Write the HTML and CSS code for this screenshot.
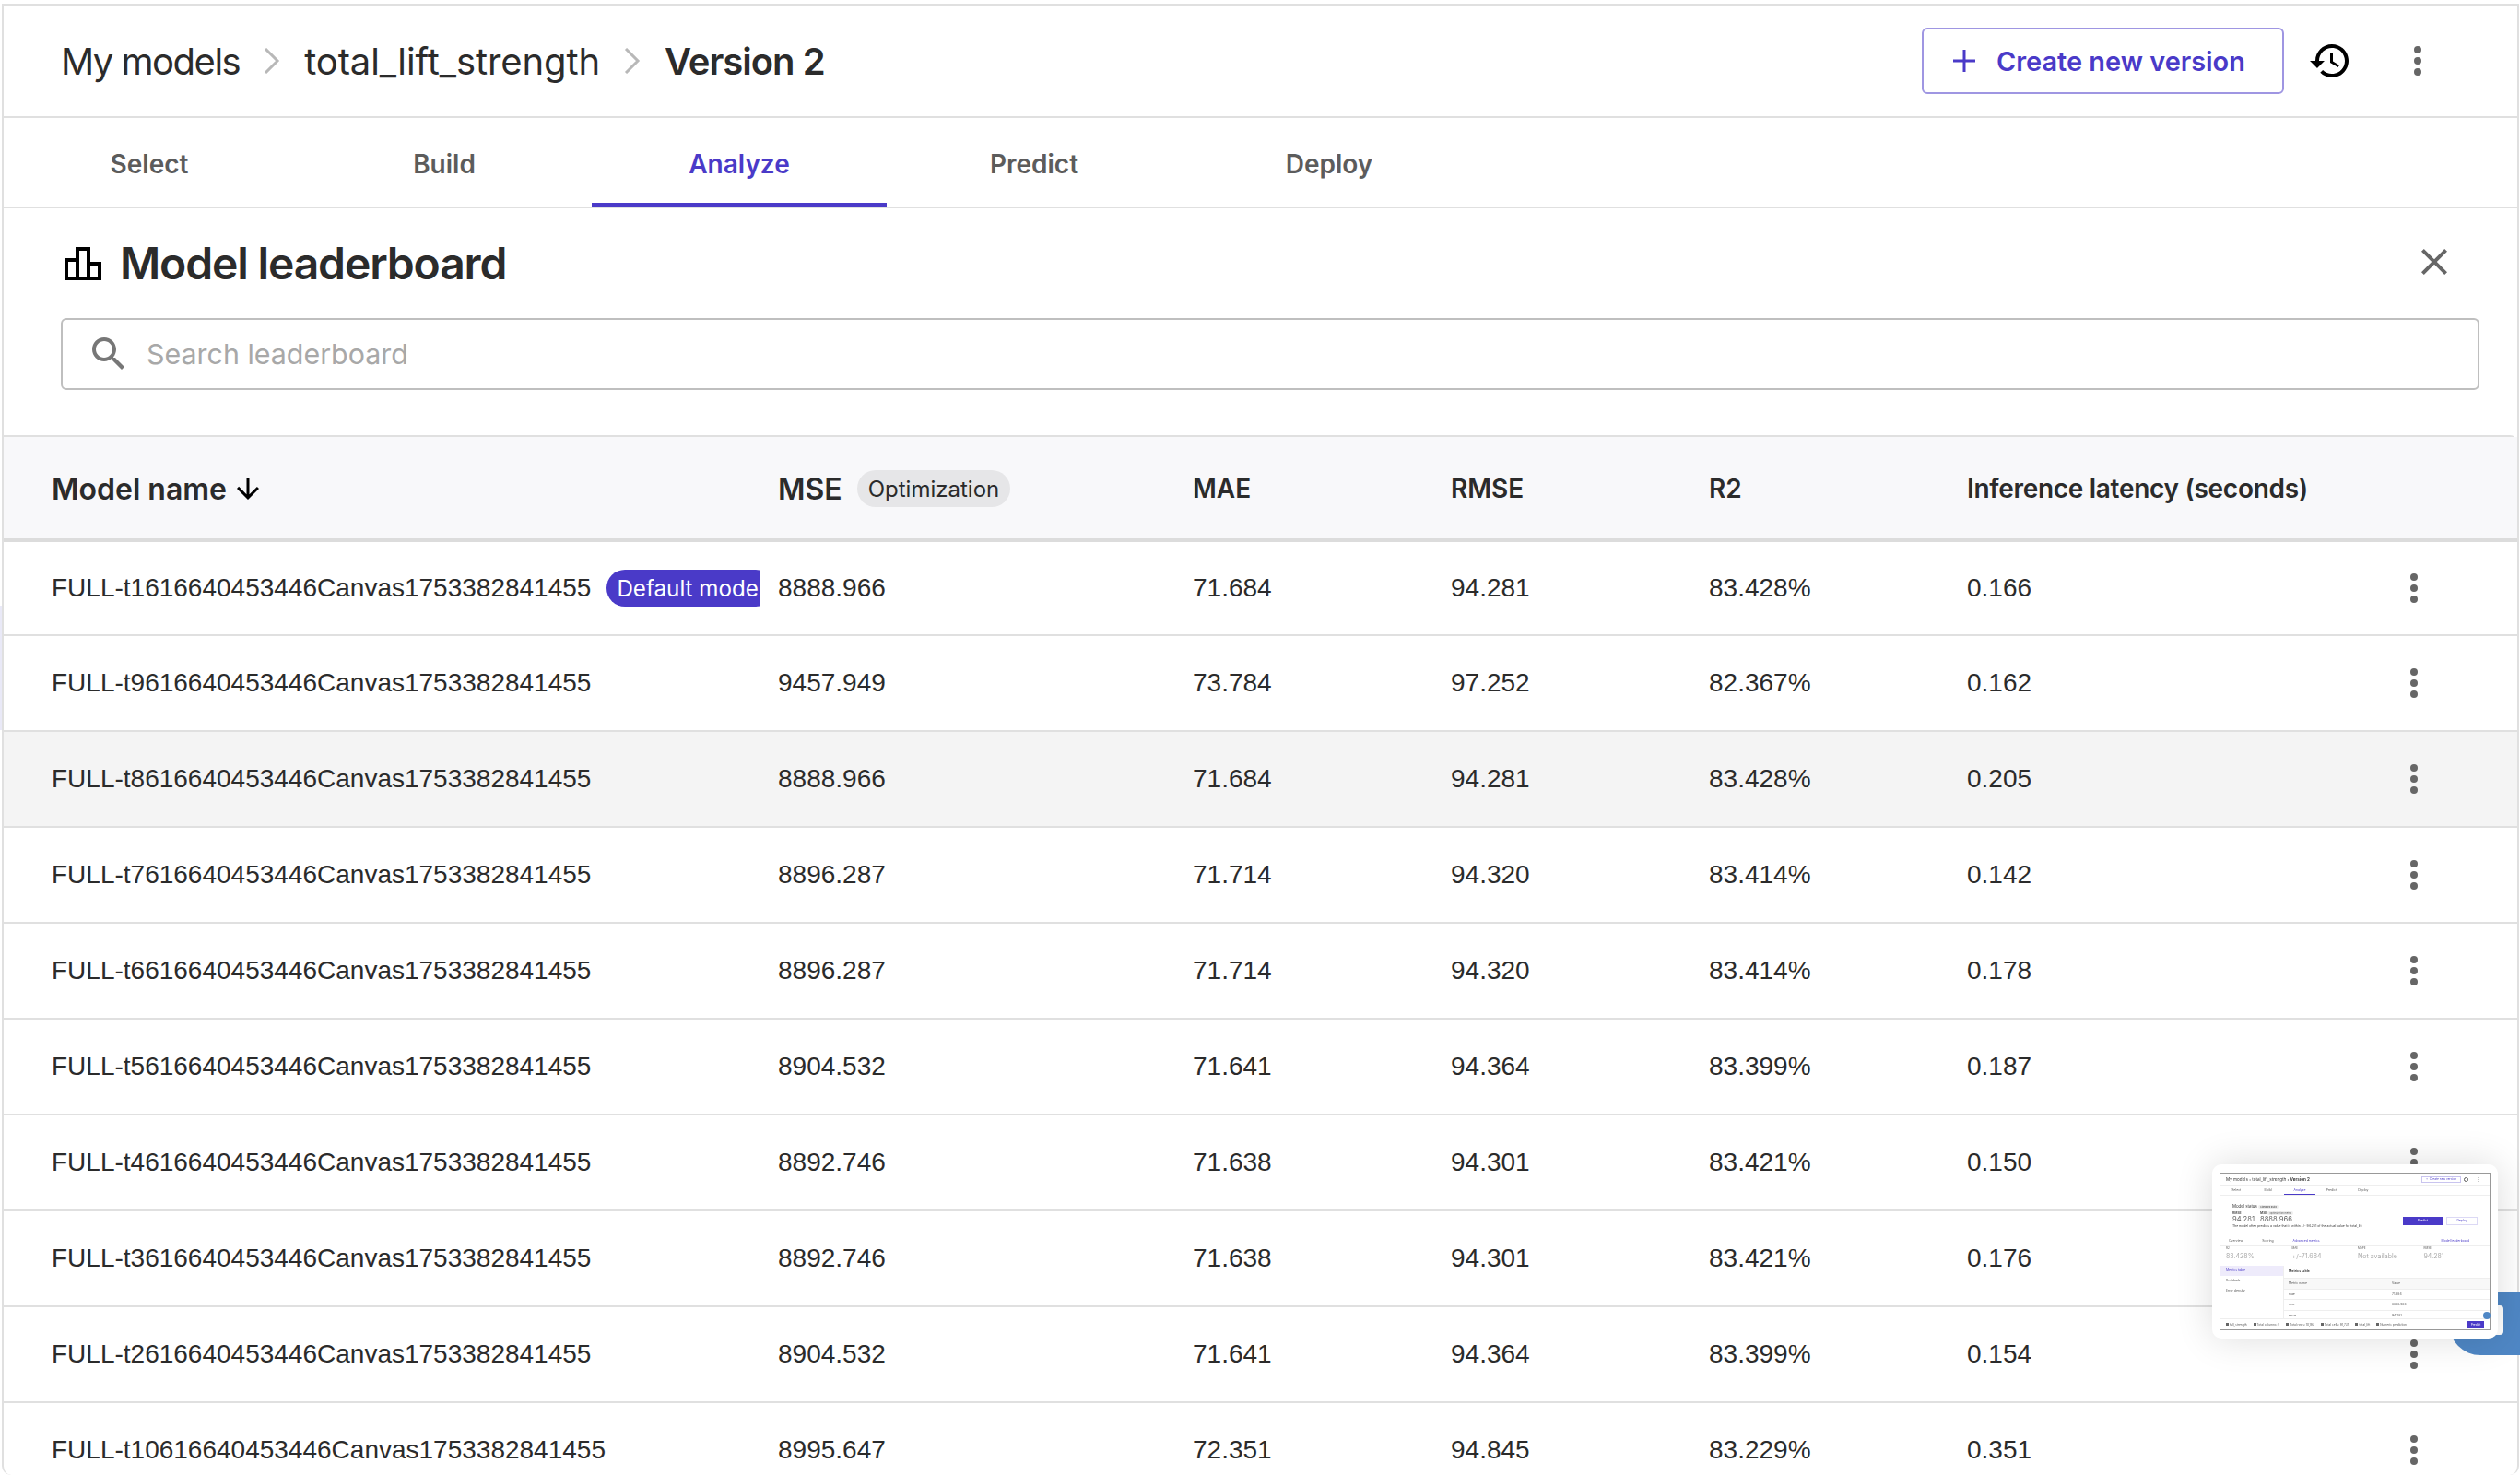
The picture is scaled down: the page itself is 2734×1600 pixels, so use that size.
FILE: index.html
```html
<!DOCTYPE html>
<html lang="en">
<head>
    <title>Model leaderboard</title>
    <link rel="stylesheet" href="styles.css">
</head>
<body>
    <div class="frame">
        <header class="topbar">
            <nav class="crumbs">
                <span>My models</span>
                <svg class="chev" viewBox="0 0 18 28"><path d="M2 1l13 13L2 27"/></svg>
                <span class="crumb-long">total_lift_strength</span>
                <svg class="chev" viewBox="0 0 18 28"><path d="M2 1l13 13L2 27"/></svg>
                <span class="crumb-current">Version 2</span>
            </nav>
            <button class="new-version">
                <svg class="plus" viewBox="0 0 24 24"><path d="M12 0v24M0 12h24"/></svg>
                Create new version
            </button>
            <svg class="history" viewBox="0 0 24 24"><path d="M13 3c-4.97 0-9 4.03-9 9H1l3.89 3.89.07.14L9 12H6c0-3.87 3.13-7 7-7s7 3.13 7 7-3.13 7-7 7c-1.93 0-3.68-.79-4.94-2.06l-1.42 1.42C8.27 19.99 10.51 21 13 21c4.97 0 9-4.03 9-9s-4.03-9-9-9zm-1 5v5l4.28 2.54.72-1.21-3.5-2.08V8H12z"/></svg>
            <div class="kebab top-kebab"><i></i><i></i><i></i></div>
        </header>

        <nav class="tabs">
            <a>Select</a>
            <a>Build</a>
            <a class="active">Analyze</a>
            <a>Predict</a>
            <a>Deploy</a>
        </nav>

        <section class="board-head">
            <svg class="board-icon" viewBox="0 0 24 24"><path d="M16 11V3H8v6H2v12h20V11h-6zm-6-6h4v14h-4V5zm-6 6h4v8H4v-8zm16 8h-4v-6h4v6z"/></svg>
            <h1>Model leaderboard</h1>
            <svg class="close" viewBox="0 0 24 24"><path d="M19 6.41 17.59 5 12 10.59 6.41 5 5 6.41 10.59 12 5 17.59 6.41 19 12 13.41 17.59 19 19 17.59 13.41 12z"/></svg>
        </section>

        <div class="search">
            <svg class="search-icon" viewBox="0 0 24 24"><path d="M15.5 14h-.79l-.28-.27C15.41 12.59 16 11.11 16 9.5 16 5.91 13.09 3 9.5 3S3 5.91 3 9.5 5.91 16 9.5 16c1.61 0 3.09-.59 4.23-1.57l.27.28v.79l5 4.99L20.49 19l-4.99-5zm-6 0C7.01 14 5 11.99 5 9.5S7.01 5 9.5 5 14 7.01 14 9.5 11.99 14 9.5 14z"/></svg>
            <span>Search leaderboard</span>
        </div>

        <section class="board">
            <div class="row head">
                <div class="cell big">Model name
                    <svg class="sort" viewBox="0 0 24 24"><path d="M20 12l-1.41-1.41L13 16.17V4h-2v12.17l-5.58-5.59L4 12l8 8 8-8z"/></svg>
                </div>
                <div class="cell big">MSE <span class="opt">Optimization</span></div>
                <div class="cell">MAE</div>
                <div class="cell">RMSE</div>
                <div class="cell">R2</div>
                <div class="cell latency">Inference latency (seconds)</div>
                <div class="cell"></div>
            </div>

            <div class="row">
                <div class="cell name">FULL-t1616640453446Canvas1753382841455 <span class="default">Default model</span></div>
                <div class="cell">8888.966</div><div class="cell">71.684</div><div class="cell">94.281</div><div class="cell">83.428%</div><div class="cell">0.166</div>
                <div class="kebab"><i></i><i></i><i></i></div>
            </div>
            <div class="row">
                <div class="cell name">FULL-t9616640453446Canvas1753382841455</div>
                <div class="cell">9457.949</div><div class="cell">73.784</div><div class="cell">97.252</div><div class="cell">82.367%</div><div class="cell">0.162</div>
                <div class="kebab"><i></i><i></i><i></i></div>
            </div>
            <div class="row hover">
                <div class="cell name">FULL-t8616640453446Canvas1753382841455</div>
                <div class="cell">8888.966</div><div class="cell">71.684</div><div class="cell">94.281</div><div class="cell">83.428%</div><div class="cell">0.205</div>
                <div class="kebab"><i></i><i></i><i></i></div>
            </div>
            <div class="row">
                <div class="cell name">FULL-t7616640453446Canvas1753382841455</div>
                <div class="cell">8896.287</div><div class="cell">71.714</div><div class="cell">94.320</div><div class="cell">83.414%</div><div class="cell">0.142</div>
                <div class="kebab"><i></i><i></i><i></i></div>
            </div>
            <div class="row">
                <div class="cell name">FULL-t6616640453446Canvas1753382841455</div>
                <div class="cell">8896.287</div><div class="cell">71.714</div><div class="cell">94.320</div><div class="cell">83.414%</div><div class="cell">0.178</div>
                <div class="kebab"><i></i><i></i><i></i></div>
            </div>
            <div class="row">
                <div class="cell name">FULL-t5616640453446Canvas1753382841455</div>
                <div class="cell">8904.532</div><div class="cell">71.641</div><div class="cell">94.364</div><div class="cell">83.399%</div><div class="cell">0.187</div>
                <div class="kebab"><i></i><i></i><i></i></div>
            </div>
            <div class="row">
                <div class="cell name">FULL-t4616640453446Canvas1753382841455</div>
                <div class="cell">8892.746</div><div class="cell">71.638</div><div class="cell">94.301</div><div class="cell">83.421%</div><div class="cell">0.150</div>
                <div class="kebab"><i></i><i></i><i></i></div>
            </div>
            <div class="row">
                <div class="cell name">FULL-t3616640453446Canvas1753382841455</div>
                <div class="cell">8892.746</div><div class="cell">71.638</div><div class="cell">94.301</div><div class="cell">83.421%</div><div class="cell">0.176</div>
                <div class="kebab"><i></i><i></i><i></i></div>
            </div>
            <div class="row">
                <div class="cell name">FULL-t2616640453446Canvas1753382841455</div>
                <div class="cell">8904.532</div><div class="cell">71.641</div><div class="cell">94.364</div><div class="cell">83.399%</div><div class="cell">0.154</div>
                <div class="kebab"><i></i><i></i><i></i></div>
            </div>
            <div class="row">
                <div class="cell name">FULL-t10616640453446Canvas1753382841455</div>
                <div class="cell">8995.647</div><div class="cell">72.351</div><div class="cell">94.845</div><div class="cell">83.229%</div><div class="cell">0.351</div>
                <div class="kebab"><i></i><i></i><i></i></div>
            </div>
        </section>
    </div>

    <div class="edge-tint"></div>

    <!-- chat widget peeking out behind the preview -->
    <div class="chat"><div class="chat-bubble"></div></div>

    <!-- floating preview of the previous page -->
    <aside class="preview">
        <div class="shot">
            <div class="s-top">
                <span>My models › total_lift_strength › <b>Version 2</b></span>
                <span class="s-new">+ &nbsp;Create new version</span>
                <span class="s-hist"></span>
                <span class="s-dots">⋮</span>
            </div>
            <div class="s-tabs">
                <span>Select</span><span>Build</span><span class="on">Analyze</span><span>Predict</span><span>Deploy</span>
            </div>
            <div class="s-status">
                <div class="s-status-text">
                    <div class="s-title">Model status <span class="s-chip">Standard build</span></div>
                    <div class="s-metrics">
                        <div><b>RMSE</b><p>94.281</p></div>
                        <div><b>MSE</b> <span class="s-chip">Optimization metric</span><p>8888.966</p></div>
                    </div>
                    <div class="s-note">The model often predicts a value that is within +/- 94.281 of the actual value for total_lift</div>
                </div>
                <span class="s-predict">Predict</span>
                <span class="s-deploy">Deploy</span>
            </div>
            <div class="s-tabs2">
                <span>Overview</span><span>Scoring</span><span class="on">Advanced metrics</span>
                <span class="s-link">Model leaderboard</span>
            </div>
            <div class="s-cards">
                <div><b>R2</b><p>83.428%</p></div>
                <div><b>MAE</b><p>+/-71.684</p></div>
                <div><b>MAPE</b><p>Not available</p></div>
                <div><b>RMSE</b><p>94.281</p></div>
            </div>
            <div class="s-body">
                <div class="s-side">
                    <span class="on">Metrics table</span><span>Residuals</span><span>Error density</span>
                </div>
                <div class="s-table">
                    <div class="s-table-title">Metrics table</div>
                    <div class="s-tr s-th"><span>Metric name</span><span>Value</span></div>
                    <div class="s-tr"><span>mae</span><span>71.684</span></div>
                    <div class="s-tr"><span>mse</span><span>8888.966</span></div>
                    <div class="s-tr"><span>rmse</span><span>94.281</span></div>
                </div>
            </div>
            <div class="s-foot">
                <span class="s-stat">full_strength</span>
                <span class="s-stat">Total columns: 9</span>
                <span class="s-stat">Total rows: 10,193</span>
                <span class="s-stat">Total cells: 91,737</span>
                <span class="s-stat">total_lift</span>
                <span class="s-stat">Numeric prediction</span>
                <span class="s-foot-btn">Predict</span>
            </div>
        </div>
        <span class="s-badge"></span>
    </aside>
</body>
</html>
```

FILE: styles.css
```css
* {
    box-sizing: border-box;
}
html,
body {
    margin: 0;
    height: 1600px;
    overflow: hidden;
    background-color: #fff;
}
body {
    padding: 4px 1px 0 2px;
    font-family: Inter, "Liberation Sans", sans-serif;
    color: #2b2b2b;
}
svg {
    flex: none;
    display: block;
}
.frame {
    height: 1596px;
    border: solid #e0e0e0;
    border-width: 2px 2px 0 2px;
    border-radius: 0 0 10px 10px;
    overflow: hidden;
}
.edge-tint {
    position: absolute;
    left: 0;
    top: 657px;
    width: 2px;
    height: 135px;
    background-color: #e9e9f7;
}

/* top bar */
.topbar {
    height: 122px;
    display: flex;
    align-items: center;
    padding-left: 62px;
    border-bottom: 2px solid #e0e0e0;
}
.crumbs {
    flex: 1;
    display: flex;
    align-items: center;
    font-size: 40px;
    letter-spacing: -1.5px;
}
.chev {
    width: 18px;
    height: 28px;
    margin: 0 26px;
    fill: none;
    stroke: #b8b8b8;
    stroke-width: 3;
}
.crumb-long {
    letter-spacing: -0.1px;
}
.crumb-current {
    font-weight: 600;
    letter-spacing: -1px;
}
.new-version {
    width: 393px;
    height: 72px;
    display: flex;
    align-items: center;
    padding: 0 0 0 32px;
    background: #fff;
    border: 2px solid #9f96e2;
    border-radius: 6px;
    color: #4a3ac8;
    font-family: inherit;
    font-size: 28.9px;
    font-weight: 600;
}
.plus {
    width: 24px;
    height: 24px;
    margin-right: 23px;
    stroke: #4a3ac8;
    stroke-width: 3;
}
.history {
    width: 48px;
    height: 48px;
    margin-left: 26px;
}
.top-kebab {
    margin-left: 67px;
    margin-right: 104px;
}
.kebab {
    width: 8px;
    display: flex;
    flex-direction: column;
    gap: 4px;
}
.kebab i {
    width: 8px;
    height: 8px;
    border-radius: 50%;
    background-color: #666;
}

/* tabs */
.tabs {
    height: 98px;
    display: flex;
    margin-left: -2px;
    border-bottom: 2px solid #e0e0e0;
}
.tabs a {
    width: 320px;
    padding-top: 33px;
    text-align: center;
    font-size: 28px;
    font-weight: 600;
    color: #5c5c5c;
}
.tabs .active {
    color: #4a3ac8;
    border-bottom: 4px solid #4a3ac8;
}

/* leaderboard heading */
.board-head {
    height: 119px;
    display: flex;
    align-items: center;
    padding: 0 66px 0 62px;
}
.board-icon {
    width: 48px;
    height: 48px;
}
.board-head h1 {
    flex: 1;
    margin: 0 0 0 16px;
    font-size: 48px;
    font-weight: 600;
    letter-spacing: -1.15px;
}
.close {
    width: 48px;
    height: 48px;
    margin-bottom: 3px;
    fill: #666;
}
.search {
    height: 78px;
    margin: 0 41px 0 62px;
    display: flex;
    align-items: center;
    padding-left: 26px;
    border: 2px solid #bfbfbf;
    border-radius: 6px;
    font-size: 30.4px;
    color: #a8a8a8;
}
.search-icon {
    width: 48px;
    height: 48px;
    margin-right: 17px;
    fill: #777;
}

/* table */
.board {
    margin-top: 49px;
    border-top: 2px solid #e0e0e0;
    border-radius: 0 8px 0 0;
    font-family: "Liberation Sans", Arial, sans-serif;
    font-size: 28px;
}
.row {
    height: 104px;
    display: grid;
    grid-template-columns: 840px 450px 280px 280px 280px 481px 8px;
    align-items: center;
    border-bottom: 2px solid #e0e0e0;
}
.cell {
    white-space: nowrap;
}
.cell:first-child {
    padding-left: 52px;
}
.head {
    height: 114px;
    padding-top: 2px;
    background-color: #f8f8fa;
    border-bottom: 4px solid #dcdcdc;
    font-family: Inter, "Liberation Sans", sans-serif;
    font-weight: 600;
}
.head + .row {
    height: 102px;
}
.latency {
    letter-spacing: -0.3px;
}
.big {
    display: flex;
    align-items: center;
    font-size: 32px;
}
.sort {
    width: 36px;
    height: 36px;
    margin-left: 5px;
}
.opt {
    height: 40px;
    margin-left: 16px;
    padding: 0 12px;
    display: flex;
    align-items: center;
    background-color: #e6e6e8;
    border-radius: 20px;
    font-size: 24px;
    font-weight: 400;
}
.hover {
    background-color: #f4f4f4;
}
.name {
    overflow: hidden;
    width: 820px;
    display: flex;
    align-items: center;
}
.default {
    height: 40px;
    margin-left: 17px;
    padding: 0 11px;
    display: flex;
    align-items: center;
    flex: none;
    background-color: #4a3ac8;
    border-radius: 20px;
    color: #fff;
    font-family: Inter, sans-serif;
    font-size: 24.2px;
}

/* chat widget */
.chat {
    position: absolute;
    left: 2657px;
    top: 1402px;
    width: 77px;
    height: 68px;
    background-color: #4f87c5;
    border-radius: 24px 0 0 34px;
}
.chat-bubble {
    position: absolute;
    right: 18px;
    top: 14px;
    width: 20px;
    height: 32px;
    background-color: #fff;
    border-radius: 0 4px 4px 0;
}

/* preview */
.preview {
    position: absolute;
    left: 2400px;
    top: 1263px;
    width: 310px;
    height: 189px;
    padding: 9px 8px;
    background-color: #fff;
    border-radius: 10px;
    box-shadow: 0 0 40px rgba(0, 0, 0, 0.14);
}
.shot {
    height: 171px;
    display: flex;
    flex-direction: column;
    border: 1px solid #999;
    font-size: 3.4px;
    color: #555;
    overflow: hidden;
    filter: blur(0.3px);
}
.shot p {
    margin: 0;
}
.s-top {
    height: 13px;
    flex: none;
    display: flex;
    align-items: center;
    padding: 0 6px;
    border-bottom: 1px solid #eee;
    font-size: 4.6px;
    color: #333;
}
.s-top > span:first-child {
    flex: 1;
}
.s-new {
    width: 43px;
    height: 7px;
    display: flex;
    align-items: center;
    justify-content: center;
    border: 1px solid #c9c4ef;
    color: #4a3ac8;
    font-size: 3.2px;
}
.s-hist {
    width: 5px;
    height: 5px;
    margin: 0 8px 0 3px;
    border: 1px solid #555;
    border-radius: 50%;
}
.s-dots {
    margin-right: 4px;
    color: #999;
}
.s-tabs {
    height: 11px;
    flex: none;
    display: flex;
    border-bottom: 1px solid #eee;
    text-align: center;
}
.s-tabs span {
    width: 34.4px;
    padding-top: 3px;
}
.s-tabs .on {
    color: #4a3ac8;
    border-bottom: 1px solid #4a3ac8;
}
.s-status {
    height: 44px;
    flex: none;
    display: flex;
    align-items: center;
    padding: 0 13px;
}
.s-status-text {
    flex: 1;
}
.s-title {
    font-size: 4.4px;
    color: #333;
}
.s-chip {
    padding: 0 2px;
    background-color: #eee;
    border-radius: 3px;
    font-size: 2.6px;
}
.s-metrics {
    display: flex;
    gap: 6px;
    margin-top: 3px;
}
.s-metrics p {
    font-size: 7.6px;
    color: #666;
}
.s-note {
    margin-top: 1px;
    font-size: 3.4px;
    color: #333;
}
.s-predict {
    width: 43px;
    height: 9px;
    margin: 10px 4px 0 0;
    display: flex;
    align-items: center;
    justify-content: center;
    background-color: #4a3ac8;
    color: #fff;
}
.s-deploy {
    width: 34px;
    height: 9px;
    margin-top: 10px;
    display: flex;
    align-items: center;
    justify-content: center;
    border: 1px solid #dcd9f5;
    color: #4a3ac8;
}
.s-tabs2 {
    height: 11px;
    flex: none;
    display: flex;
    align-items: center;
    padding-left: 9px;
    gap: 21px;
    border-bottom: 1px solid #eee;
}
.s-tabs2 .on {
    color: #4a3ac8;
}
.s-link {
    margin-left: auto;
    margin-right: 22px;
    color: #4a3ac8;
}
.s-cards {
    height: 21px;
    flex: none;
    display: grid;
    grid-template-columns: repeat(4, 1fr);
    padding-left: 6px;
}
.s-cards b {
    font-weight: 400;
    font-size: 3px;
}
.s-cards p {
    margin-top: 2px;
    font-size: 7px;
    color: #aaa;
}
.s-body {
    flex: 1;
    display: flex;
    min-height: 0;
}
.s-side {
    width: 69px;
    flex: none;
    display: flex;
    flex-direction: column;
    border-right: 1px solid #eee;
}
.s-side span {
    height: 11px;
    padding: 3px 6px;
}
.s-side .on {
    background-color: #eeebfb;
    color: #4a3ac8;
}
.s-table {
    flex: 1;
}
.s-table-title {
    height: 13px;
    padding: 4px 5px;
    font-size: 3.6px;
    font-weight: 600;
    color: #333;
}
.s-tr {
    height: 11.5px;
    display: grid;
    grid-template-columns: 112px 1fr;
    align-items: center;
    padding-left: 5px;
    border-top: 1px solid #eee;
}
.s-th {
    background-color: #f8f8f8;
}
.s-foot {
    height: 12px;
    flex: none;
    display: flex;
    align-items: center;
    gap: 7px;
    padding-left: 6px;
    background-color: #fff;
    border-top: 1px solid #eee;
    font-size: 3.2px;
}
.s-stat {
    display: flex;
    align-items: center;
    gap: 1px;
}
.s-stat::before {
    content: "";
    width: 3px;
    height: 3px;
    background-color: #666;
}
.s-foot-btn {
    width: 18px;
    height: 8px;
    margin-left: auto;
    margin-right: 6px;
    display: flex;
    align-items: center;
    justify-content: center;
    background-color: #4a3ac8;
    color: #fff;
}
.s-badge {
    position: absolute;
    left: 294px;
    top: 160px;
    width: 8px;
    height: 8px;
    background-color: #4f87c5;
    border-radius: 50%;
}
```
